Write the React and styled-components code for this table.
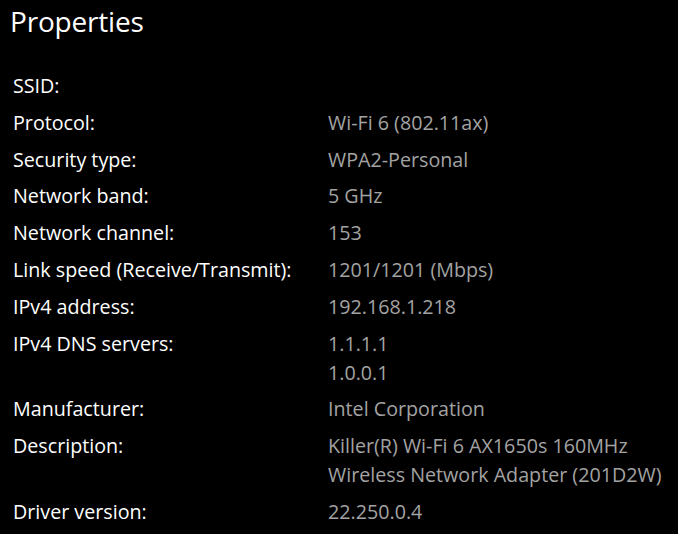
import React from "react";
import styled, { createGlobalStyle } from "styled-components";

const GlobalStyle = createGlobalStyle`
  html, body {
    margin: 0;
    padding: 0;
    background: #000;
  }
  body {
    font-family: "Open Sans", "Noto Sans", "Liberation Sans", sans-serif;
    -webkit-font-smoothing: antialiased;
  }
`;

const properties = [
  { label: "SSID:", value: [""] },
  { label: "Protocol:", value: ["Wi-Fi 6 (802.11ax)"] },
  { label: "Security type:", value: ["WPA2-Personal"] },
  { label: "Network band:", value: ["5 GHz"] },
  { label: "Network channel:", value: ["153"] },
  { label: "Link speed (Receive/Transmit):", value: ["1201/1201 (Mbps)"] },
  { label: "IPv4 address:", value: ["192.168.1.218"] },
  { label: "IPv4 DNS servers:", value: ["1.1.1.1", "1.0.0.1"] },
  { label: "Manufacturer:", value: ["Intel Corporation"] },
  {
    label: "Description:",
    value: ["Killer(R) Wi-Fi 6 AX1650s 160MHz", "Wireless Network Adapter (201D2W)"],
  },
  { label: "Driver version:", value: ["22.250.0.4"] },
];

export default function App() {
  return (
    <Page>
      <GlobalStyle />
      <Title>Properties</Title>
      <PropertyGrid>
        {properties.map((p) => (
          <React.Fragment key={p.label}>
            <Label>{p.label}</Label>
            <Value>
              {p.value.map((line, i) => (
                <Line key={i}>{line || "\u00a0"}</Line>
              ))}
            </Value>
          </React.Fragment>
        ))}
      </PropertyGrid>
    </Page>
  );
}

const Page = styled.div`
  width: 678px;
  height: 534px;
  background: #000;
  color: #fff;
  padding: 0 13px;
  box-sizing: border-box;
  overflow: hidden;
`;

const Title = styled.h1`
  margin: 0 0 0 -3px;
  padding-top: 1px;
  font-size: 28px;
  font-weight: 400;
  line-height: 40px;
  letter-spacing: -0.2px;
  color: #fff;
`;

const PropertyGrid = styled.div`
  display: grid;
  grid-template-columns: 315px 1fr;
  row-gap: 7.8px;
  margin-top: 30px;
  font-size: 19.7px;
  line-height: 29px;
`;

const Label = styled.div`
  color: #fff;
  white-space: nowrap;
`;

const Value = styled.div`
  display: flex;
  flex-direction: column;
  color: #a3a3a3;
`;

const Line = styled.span`
  white-space: nowrap;
`;
